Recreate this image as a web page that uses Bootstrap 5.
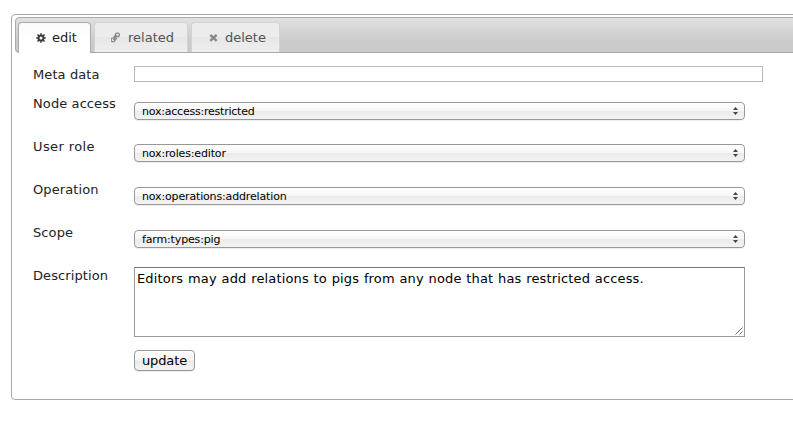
<!DOCTYPE html>
<html lang="en">
<head>
<meta charset="utf-8">
<title>Edit</title>
<link href="https://cdn.jsdelivr.net/npm/bootstrap@5.3.0/dist/css/bootstrap.min.css" rel="stylesheet">
<style>
body{font-family:"DejaVu Sans",Verdana,sans-serif;font-size:13px;line-height:18px;color:#222;background:#fff;height:428px}
.panel-box{width:810px;height:386px;margin:14px 0 0 11px;border:1px solid #aaa;border-radius:4px;padding:2px 3px;flex:none}
.tab-strip{height:36px;border:1px solid #aaa;border-radius:4px;border-bottom-right-radius:0;background:linear-gradient(#e1e1e1,#ccc 65%,#cacaca);padding:4px 2px 0;gap:3px}
.tab-strip .nav-link{height:30px;border:1px solid #d3d3d3;border-bottom:0;border-radius:4px 4px 0 0;padding:0;color:#555;background:linear-gradient(#ececec 48%,#e6e6e6 50%,#efefef)}
.tab-strip .nav-link.active{height:31px;border-color:#aaa;color:#212121;background:linear-gradient(#fafafa,#fff 50%)}
.tab-edit{width:73px}.tab-related{width:94px}.tab-delete{width:89px}
.tab-strip svg{flex:none}
.tab-strip span{line-height:18px;padding-left:1px}
.tab-strip .tab-related span{padding-left:2px}
.form-grid{padding:13px 0 0 18px}
.line{height:43px}
.line-first{height:29px}
.line-text{height:83px}
.lbl{width:101px;flex:none;white-space:nowrap;letter-spacing:.1px}
.lbl-role{letter-spacing:.4px}
.meta-input{width:629px;height:16px;border:1px solid #b9b9b9;border-radius:0;padding:0}
.pick{width:611px;height:18px;margin-top:6px;padding:0 6px 0 7px;border:1px solid #989898;border-radius:4px;background:linear-gradient(#fff,#f6f6f6 48%,#ebebeb 52%,#f3f3f3);box-shadow:0 1px 0 #eee;font-size:11px;line-height:16px;color:#000}
.pick span{letter-spacing:-.15px;padding-top:1px}
.pick-low{margin-top:7px}
.pick-low span{letter-spacing:-.22px!important}
.desc{width:611px;height:70px;border:1px solid #999;border-top-color:#777;border-radius:0;padding:2px;resize:none;font-size:13px;line-height:18px;letter-spacing:.15px;word-spacing:.45px;color:#000}
.grip{right:2px;bottom:2px}
.update-btn{width:61px;height:21px;padding:0;border:1px solid #989898;border-radius:4px;background:linear-gradient(#fff,#f6f6f6 48%,#ebebeb 52%,#f3f3f3);box-shadow:0 1px 0 #eee;font-size:13px;line-height:18px;letter-spacing:-.1px;color:#000}
</style>
<script src="https://cdn.jsdelivr.net/npm/bootstrap@5.3.0/dist/js/bootstrap.bundle.min.js"></script>
</head>
<body class="overflow-hidden d-flex align-items-start">
<main class="panel-box">
  <nav class="nav nav-tabs tab-strip flex-nowrap">
    <a class="nav-link active tab-edit d-flex align-items-center" href="#"><svg class="ms-3" width="12" height="12" viewBox="0 0 12 12" fill="none" stroke="#3d3d3d"><circle cx="6" cy="6" r="2.5" stroke-width="2"/><path stroke-width="1.5" d="M6 1.3v2M6 8.7v2M1.3 6h2M8.7 6h2M2.5 2.5l1.6 1.6M7.9 7.9l1.6 1.6M9.5 2.5L7.9 4.1M4.1 7.9L2.5 9.5"/></svg><span class="ms-1">edit</span></a>
    <a class="nav-link tab-related d-flex align-items-center" href="#"><svg class="ms-3" width="11" height="11" viewBox="0 0 11 11" fill="none" stroke="#888" stroke-width="1.3"><g transform="translate(-1 0)"><rect x="5.6" y="1.2" width="3.7" height="3.4" rx="1.2"/><rect x="1.1" y="6.2" width="3.7" height="3.4" rx="1.2"/><path d="M3.2 7.6l4-4.2M3.6 5.2l2-2.2M4.8 8.2l2-2.2"/></g></svg><span class="ms-1">related</span></a>
    <a class="nav-link tab-delete d-flex align-items-center" href="#"><svg class="ms-3" width="12" height="12" viewBox="0 0 12 12" stroke="#888" stroke-width="2.4"><path d="M2.3 2.8l6.4 6M8.7 2.8L2.3 8.8"/></svg><span class="ms-1">delete</span></a>
  </nav>
  <form class="form-grid">
    <div class="d-flex align-items-start line-first"><label class="lbl" for="meta">Meta data</label><input id="meta" class="form-control meta-input"></div>
    <div class="d-flex align-items-start line"><span class="lbl">Node access</span>
      <button type="button" class="btn pick pick-low d-flex justify-content-between align-items-center"><span>nox:access:restricted</span><svg width="5" height="8" viewBox="0 0 5 8" fill="#444"><path d="M0 3L2.5 0L5 3zM0 5h5L2.5 8z"/></svg></button></div>
    <div class="d-flex align-items-start line"><span class="lbl lbl-role">User role</span>
      <button type="button" class="btn pick d-flex justify-content-between align-items-center"><span>nox:roles:editor</span><svg width="5" height="8" viewBox="0 0 5 8" fill="#444"><path d="M0 3L2.5 0L5 3zM0 5h5L2.5 8z"/></svg></button></div>
    <div class="d-flex align-items-start line"><span class="lbl">Operation</span>
      <button type="button" class="btn pick d-flex justify-content-between align-items-center"><span>nox:operations:addrelation</span><svg width="5" height="8" viewBox="0 0 5 8" fill="#444"><path d="M0 3L2.5 0L5 3zM0 5h5L2.5 8z"/></svg></button></div>
    <div class="d-flex align-items-start line"><span class="lbl">Scope</span>
      <button type="button" class="btn pick d-flex justify-content-between align-items-center"><span>farm:types:pig</span><svg width="5" height="8" viewBox="0 0 5 8" fill="#444"><path d="M0 3L2.5 0L5 3zM0 5h5L2.5 8z"/></svg></button></div>
    <div class="d-flex align-items-start line-text"><label class="lbl" for="desc">Description</label>
      <div class="position-relative d-flex"><textarea id="desc" class="form-control desc overflow-hidden">Editors may add relations to pigs from any node that has restricted access.</textarea><svg class="grip position-absolute" width="8" height="8" viewBox="0 0 8 8" stroke="#555" stroke-width=".9"><path d="M.5 7.5l7-7M4.5 7.5l3-3"/></svg></div></div>
    <div class="d-flex"><span class="lbl"></span><button type="button" class="btn update-btn">update</button></div>
  </form>
</main>
</body>
</html>
